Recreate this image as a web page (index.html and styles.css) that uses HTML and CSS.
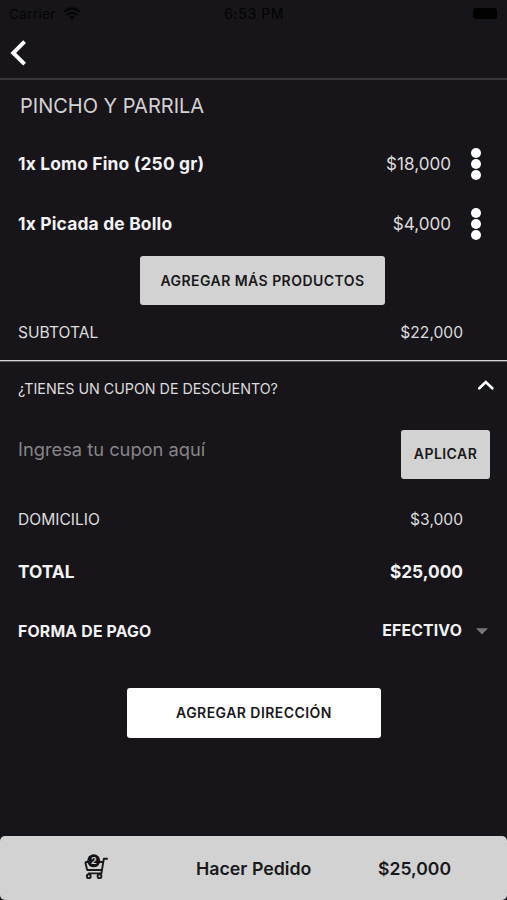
FILE: index.html
```html
<!DOCTYPE html>
<html lang="es">
<head>
<meta charset="utf-8">
<title>Pedido</title>
<link rel="stylesheet" href="styles.css">
</head>
<body>
<main class="screen">
  <div class="status">
    <span class="carrier">Carrier
      <svg class="wifi" viewBox="0 0 18 14" width="18" height="14"><path d="M1 5Q9-2 17 5M4 8Q9 3.5 14 8" fill="none" stroke="#050506" stroke-width="2.3"/><path d="M6 10.2Q9 7.8 12 10.2L9 13.3z" fill="#050506"/></svg>
    </span>
    <span class="clock">6:53 PM</span>
    <span class="battery"></span>
  </div>
  <nav class="nav">
    <svg class="back" viewBox="0 0 18 28" width="18" height="28"><path d="M15.6 2.7 4.2 14 15.6 25.1" fill="none" stroke="#fff" stroke-width="3.9"/></svg>
  </nav>
  <h1 class="title">PINCHO Y PARRILA</h1>
  <div class="item"><span class="name">1x Lomo Fino (250 gr)</span><span class="price">$18,000</span><span class="dots"><i></i><i></i><i></i></span></div>
  <div class="item"><span class="name">1x Picada de Bollo</span><span class="price">$4,000</span><span class="dots"><i></i><i></i><i></i></span></div>
  <button class="btn more">AGREGAR MÁS PRODUCTOS</button>
  <div class="row subtotal"><span>SUBTOTAL</span><span>$22,000</span></div>
  <div class="coupon-head"><span>¿TIENES UN CUPON DE DESCUENTO?</span>
    <svg viewBox="0 0 18 12" width="18" height="12"><path d="M2.3 9.2 8.8 3 15.3 9.2" fill="none" stroke="#fff" stroke-width="2.7" stroke-linecap="round"/></svg>
  </div>
  <div class="coupon"><span class="hint">Ingresa tu cupon aquí</span><button class="btn apply">APLICAR</button></div>
  <div class="row delivery"><span>DOMICILIO</span><span>$3,000</span></div>
  <div class="row total"><span>TOTAL</span><span>$25,000</span></div>
  <div class="row pay"><span class="label">FORMA DE PAGO</span><span class="method">EFECTIVO</span><svg viewBox="0 0 12 7" width="12" height="7"><path d="M0 .3h12L6 6.5z" fill="#777679"/></svg></div>
  <button class="btn address">AGREGAR DIRECCIÓN</button>
  <footer class="footer">
    <svg class="cart" viewBox="0 0 26 30" width="26" height="30"><g fill="none" stroke="#19181b" stroke-width="1.9" stroke-linejoin="round"><path d="M24.8 5.8H20.8L18.4 20.4H5.2M2.2 9 4.2 17H19M2.2 9H20.4"/><circle cx="5.8" cy="23.2" r="1.9"/><circle cx="16.5" cy="23.2" r="1.9"/></g><circle cx="10.7" cy="7.8" r="6.5" fill="#111013"/><text x="10.8" y="10.9" text-anchor="middle" class="badge">2</text></svg>
    <span class="order">Hacer Pedido</span><span class="sum">$25,000</span>
  </footer>
</main>
</body>
</html>
```
FILE: styles.css
```css
* { box-sizing: border-box; }
body { margin: 0; background: #171519; color: #dddcde; font-family: Inter, "Liberation Sans", sans-serif; }
.screen { width: 507px; height: 900px; display: flex; flex-direction: column; overflow: hidden; }
.status { height: 28px; flex: none; display: grid; grid-template-columns: 1fr auto 1fr; align-items: center; padding: 0 10px 1px 9px; color: #050506; font-size: 13.5px; }
.carrier { display: flex; align-items: center; gap: 7px; letter-spacing: .35px; }
.clock { font-weight: 500; font-size: 14px; letter-spacing: .6px; margin-left: 2px; }
.battery { justify-self: end; width: 24px; height: 11px; border-radius: 3px; background: #020202; }
.nav { height: 52px; flex: none; border-bottom: 2px solid #38363a; padding: 11px 0 0 9px; }
.nav svg { display: block; }
.title { height: 54px; flex: none; margin: 0; padding: 0 20px; line-height: 52px; font-size: 20px; font-weight: 400; color: #d3d2d4; }
.item { height: 60px; flex: none; display: flex; align-items: center; padding: 0 26px 0 18px; font-size: 17.1px; }
.name, .price { margin-bottom: 1px; }
.name { font-weight: 700; font-size: 17.4px; letter-spacing: .18px; color: #f3f2f4; flex: 1; }
.dots { width: 10px; margin-left: 20px; display: flex; flex-direction: column; align-items: center; gap: 1px; }
.dots i { width: 10px; height: 10px; border-radius: 50%; background: #fff; }
.btn { border: 0; padding: 0 0 1px; height: 49px; flex: none; border-radius: 3px; background: #d2d2d2; color: #19181b; font: 600 14px Inter, "Liberation Sans", sans-serif; letter-spacing: .45px; }
.more { width: 245px; margin: 2px 0 0 140px; }
.row { flex: none; display: flex; align-items: center; justify-content: space-between; padding: 0 44px 0 18px; font-size: 15.6px; }
.subtotal { height: 55px; }
.coupon-head { height: 55px; flex: none; border-top: 1px solid #d4d3d5; box-shadow: inset 0 1px #565558; display: flex; align-items: center; justify-content: space-between; padding: 0 12px 0 18px; font-size: 14.28px; }
.coupon-head svg { margin-bottom: 6px; }
.coupon { height: 78px; flex: none; display: flex; align-items: center; justify-content: space-between; padding: 0 17px 0 18px; }
.hint { color: #868588; font-size: 18.3px; margin-bottom: 11px; }
.apply { width: 89px; }
.delivery { height: 52px; }
.total { height: 52px; font-weight: 700; font-size: 17.3px; color: #f3f2f4; }
.pay { height: 68px; font-weight: 700; font-size: 15.8px; letter-spacing: .15px; color: #f3f2f4; padding-right: 19px; }
.label { letter-spacing: .2px; }
.method { margin-left: auto; margin-right: 14px; margin-bottom: 1px; }
.address { width: 254px; margin: 23px 0 0 127px; height: 50px; background: #fff; }
.footer { height: 64px; flex: none; margin-top: auto; background: #d2d2d2; border-radius: 5px; display: flex; align-items: center; color: #19181b; font-weight: 600; font-size: 17.8px; padding: 0 56px 0 83px; }
.order { margin-left: 87px; }
.sum { margin-left: auto; font-size: 17.6px; }
.badge { font-size: 9px; font-weight: 700; fill: #d2d2d2; }
```
